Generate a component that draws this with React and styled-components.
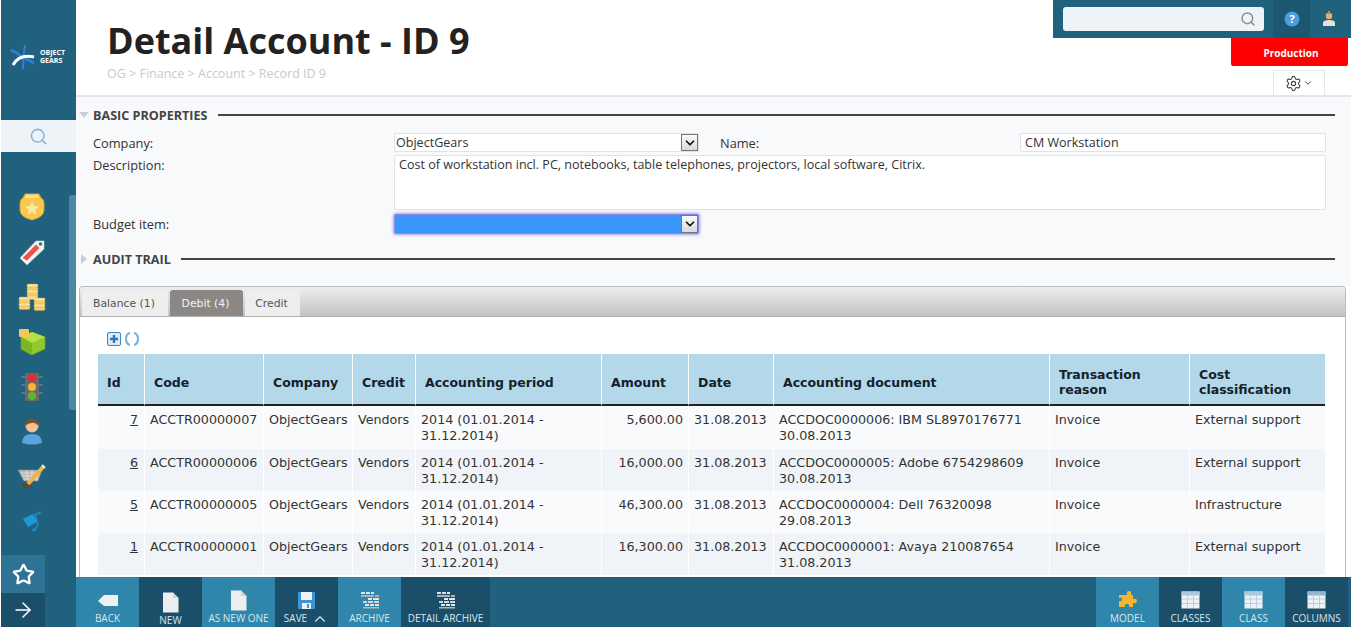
import React from "react"
import styled, { createGlobalStyle } from "styled-components"
import { Search, Star, ArrowRight, ChevronDown, ChevronUp, Settings } from "lucide-react"

const GlobalStyle = createGlobalStyle`
  html, body { margin: 0; padding: 0; height: 100%; overflow: hidden; }
  body { font-family: "Open Sans", "Liberation Sans", sans-serif; color: #333; background: #fff; }
  * { box-sizing: border-box; }
`

const Page = styled.div`
  display: flex;
  width: 1351px;
  height: 627px;
  overflow: hidden;
  padding-left: 1px;
`

const Sidebar = styled.aside`
  width: 75px;
  flex: none;
  display: flex;
  flex-direction: column;
  background: #20627d;
`

const LogoBox = styled.div`
  height: 120px;
  flex: none;
  display: flex;
  align-items: center;
  gap: 4px;
  padding: 0 0 6px 9px;
`

const LogoText = styled.div`
  color: #fff;
  font-size: 7px;
  font-weight: 700;
  line-height: 8px;
`

const SideSearch = styled.div`
  height: 32px;
  flex: none;
  background: #eef3f8;
  display: flex;
  align-items: center;
  justify-content: center;
  color: #86b8dc;
`

const SideBody = styled.div`
  flex: 1;
  display: flex;
  min-height: 0;
`

const IconColumn = styled.div`
  flex: 1;
  display: flex;
  flex-direction: column;
  align-items: center;
  padding-top: 33px;
  padding-right: 7px;
`

const SideIcon = styled.div`
  height: 44.8px;
  flex: none;
  display: flex;
  align-items: center;
  justify-content: center;
`

const ScrollTrack = styled.div`
  width: 7px;
  flex: none;
  padding-top: 43px;
`

const ScrollThumb = styled.div`
  height: 215px;
  background: #4d87a1;
  border-radius: 3px 0 0 3px;
`

const SideButton = styled.div`
  width: 44px;
  flex: none;
  height: ${p => p.$h}px;
  background: ${p => p.$bg};
  color: #fff;
  display: flex;
  align-items: center;
  justify-content: center;
`

const Main = styled.main`
  flex: 1;
  min-width: 0;
  display: flex;
  flex-direction: column;
`

const Header = styled.header`
  height: 97px;
  flex: none;
  display: flex;
  justify-content: space-between;
  border-bottom: 2px solid #e3e5e8;
`

const TitleBlock = styled.div`
  padding: 17px 0 0 31px;
`

const Title = styled.h1`
  margin: 0;
  font-size: 36px;
  line-height: 48px;
  font-weight: 700;
  color: #222;
`

const Crumbs = styled.div`
  font-size: 12.5px;
  line-height: 17px;
  color: #c9c9c9;
`

const HeaderRight = styled.div`
  width: 298px;
  display: flex;
  flex-direction: column;
  align-items: flex-end;
`

const TopBar = styled.div`
  width: 298px;
  height: 38px;
  flex: none;
  background: #20627d;
  display: flex;
  padding: 0 3px 0 10px;
`

const TopSearch = styled.div`
  width: 201px;
  height: 24px;
  margin-top: 7px;
  background: #eef3f8;
  border-radius: 3px;
  display: flex;
  align-items: center;
  justify-content: flex-end;
  padding-right: 8px;
  color: #8a8f94;
`

const TopButton = styled.div`
  width: 37px;
  height: 38px;
  margin-left: ${p => p.$ml || 0}px;
  background: ${p => p.$bg || "transparent"};
  display: flex;
  align-items: center;
  justify-content: center;
`

const Env = styled.div`
  width: 117px;
  height: 29px;
  margin-right: 3px;
  padding: 2px 0 0 3px;
  background: #fe0000;
  color: #fff;
  font-size: 10px;
  font-weight: 700;
  border-radius: 0 0 2px 2px;
  display: flex;
  align-items: center;
  justify-content: center;
`

const GearBox = styled.div`
  width: 52px;
  height: 25px;
  margin: 4px 26px 0 0;
  border: 1px solid #e6e6e6;
  border-bottom: 0;
  display: flex;
  align-items: center;
  justify-content: center;
  gap: 1px;
  color: #444;
`

const FormArea = styled.section`
  flex: none;
  background: #f8f9fb;
  height: 189px;
`

const SectionHead = styled.div`
  height: ${p => p.$h}px;
  display: flex;
  align-items: center;
  padding: 0 16px 0 3px;
  font-size: 12.6px;
  font-weight: 700;
  color: #444;
`

const Triangle = styled.span`
  width: 0;
  height: 0;
  margin-right: 4px;
  ${p => p.$open
    ? "border-left: 5px solid transparent; border-right: 5px solid transparent; border-top: 6px solid #c9ced3;"
    : "margin-left: 2px; margin-right: 6px; border-top: 5px solid transparent; border-bottom: 5px solid transparent; border-left: 6px solid #c9ced3;"}
`

const SectionLine = styled.span`
  flex: 1;
  height: 2px;
  margin-left: 10px;
  background: #444;
`

const FormGrid = styled.div`
  display: grid;
  grid-template-columns: 301px 305px 21px 300px 306px;
  grid-template-rows: 19px 56px 20px;
  row-gap: 3px;
  padding-left: 17px;
  font-size: 12.8px;
  color: #333;
`

const Label = styled.label`
  line-height: 20px;
  grid-column: ${p => p.$col || "auto"};
`

const Field = styled.div`
  background: #fff;
  border: 1px solid #dfe2e6;
  border-radius: 2px;
  padding: 0 4px;
  line-height: 18px;
  font-size: 12.55px;
  color: #333;
  white-space: nowrap;
  overflow: hidden;
  grid-column: ${p => p.$col || "auto"};
`

const TextArea = styled(Field)`
  height: 55px;
`

const SelectBox = styled.div`
  display: flex;
  gap: 1px;
  height: ${p => (p.$focus ? 20 : 19)}px;
  background: ${p => (p.$focus ? "#3a97fa" : "#fff")};
  border: 1px solid ${p => (p.$focus ? "#8d88e6" : "#dfe2e6")};
  box-shadow: ${p => (p.$focus ? "0 0 3px 1px #a9a5ee" : "none")};
  border-radius: 2px;
  font-size: 12.55px;
  line-height: 18px;
  padding-left: 1px;
  color: #333;
`

const SelectValue = styled.span`
  flex: 1;
`

const SelectArrow = styled.span`
  width: 17px;
  flex: none;
  display: flex;
  align-items: center;
  justify-content: center;
  background: linear-gradient(#fbfbfb, #d9d9d9);
  border: 1px solid #777;
  color: #111;
`

const TabPanel = styled.section`
  flex: 1;
  min-height: 0;
  margin: 0 5px 0 3px;
  border: 1px solid #b8bcc0;
  border-bottom: 0;
  border-radius: 4px 4px 0 0;
  background: #fff;
  overflow: hidden;
`

const TabBar = styled.div`
  height: 30px;
  display: flex;
  gap: 2px;
  align-items: flex-end;
  padding-left: 2px;
  background: linear-gradient(#eeeeee, #c3c3c3);
  border-bottom: 1px solid #b0b0b0;
`

const Tab = styled.div`
  width: ${p => p.$w}px;
  height: 26px;
  padding: 1px 2px 0 0;
  display: flex;
  align-items: center;
  justify-content: center;
  font-family: "DejaVu Sans", Verdana, sans-serif;
  font-size: 10.8px;
  border-radius: 3px 3px 0 0;
  background: ${p => (p.$active ? "#8a8785" : "#eeeeee")};
  color: ${p => (p.$active ? "#f2f2f2" : "#555")};
`

const TabBody = styled.div`
  padding: 13px 20px 0 18px;
`

const Actions = styled.div`
  height: 24px;
  display: flex;
  gap: 4px;
  padding: 2px 0 0 9px;
`

const Table = styled.table`
  width: 1227px;
  table-layout: fixed;
  border-collapse: separate;
  border-spacing: 0;
  font-family: "DejaVu Sans", Verdana, sans-serif;
  font-size: 12.7px;
  color: #333;
`

const Th = styled.th`
  height: 52px;
  background: #b2d8ea;
  border-right: 1px solid #fff;
  border-bottom: 2px solid #222;
  padding: 6px 0 0 9px;
  text-align: left;
  vertical-align: middle;
  font-size: 12.5px;
  line-height: 15px;
  font-weight: 700;
  color: #14212b;
  &:last-child { border-right: 0; }
`

const Row = styled.tr`
  &:first-child td { height: 43px; }
`

const Td = styled.td`
  height: 42px;
  padding: 6px 5px 4px;
  line-height: 16px;
  vertical-align: top;
  border-right: 1px solid #fff;
  text-align: ${p => (p.$right ? "right" : "left")};
  background: ${p => (p.$even ? "#f0f3f7" : "#f9fafc")};
  &:last-child { border-right: 0; }
`

const IdLink = styled.span`
  text-decoration: underline;
  padding-right: 1px;
`

const Toolbar = styled.footer`
  height: 50px;
  flex: none;
  background: #20627d;
  display: flex;
  justify-content: space-between;
  padding-right: 3px;
`

const ToolGroup = styled.div`
  display: flex;
`

const ToolButton = styled.div`
  width: ${p => p.$w}px;
  height: 50px;
  background: ${p => (p.$light ? "#2f86aa" : "#1b4f69")};
  color: #d8e6ee;
  font-size: 10px;
  white-space: nowrap;
  display: flex;
  flex-direction: column;
  align-items: center;
  justify-content: flex-start;
  padding-top: ${p => p.$top ?? 11}px;
`

const ToolIcon = styled.div`
  height: 24px;
  display: flex;
  align-items: center;
  justify-content: center;
`

const ToolLabel = styled.div`
  display: flex;
  align-items: center;
  gap: 4px;
  line-height: 13px;
  margin-top: ${p => p.$mt ?? 0}px;
`

// -- drawn icons --

const LogoMark = () => (
  <svg width="26" height="26" viewBox="0 0 26 26">
    <path d="M1 6 Q8 9 12 13 L24 19" stroke="#2f7fe0" strokeWidth="2.6" fill="none" />
    <path d="M15 1 Q13 12 13 25" stroke="#2f7fe0" strokeWidth="2" fill="none" />
    <path d="M3 21 Q9 10 24 13" stroke="#fff" strokeWidth="3" fill="none" />
  </svg>
)

const Badge = () => (
  <svg width="26" height="28" viewBox="0 0 26 28">
    <path d="M6 1 H20 L22 5 Q25 6 25 10 V17 Q25 24 13 27 Q1 24 1 17 V10 Q1 6 4 5 Z" fill="#f7c94f" stroke="#d99a2b" strokeWidth="1" />
    <path d="M7 1.5 H19 L20 5 H6 Z" fill="#fbe08a" />
    <path d="M13 8 L15 13 L20 13.5 L16 17 L17.5 22 L13 19 L8.5 22 L10 17 L6 13.5 L11 13 Z" fill="#fde9a3" />
  </svg>
)

const TagIcon = () => (
  <svg width="28" height="28" viewBox="0 0 28 28">
    <path d="M2 20 L18 3 H26 V11 L9 27 Z" fill="#f4f4f4" stroke="#c9c9c9" strokeWidth="0.6" />
    <path d="M4.5 20 L18 6.5 L21.5 10 L9 22.5 Z" fill="#e8544a" />
    <circle cx="22.5" cy="6" r="1.8" fill="#3d6f8a" />
  </svg>
)

const Coin = ({ x, y, n }) => (
  <g>
    {Array.from({ length: n }).map((_, i) => (
      <rect key={i} x={x} y={y + i * 3} width="11" height="3.4" rx="1.4" fill={i % 2 ? "#f6cf6c" : "#fbe39b"} stroke="#dca63f" strokeWidth="0.4" />
    ))}
  </g>
)

const Coins = () => (
  <svg width="28" height="28" viewBox="0 0 28 28">
    <Coin x={9} y={1} n={5} />
    <Coin x={1} y={14} n={4} />
    <Coin x={16} y={15} n={4} />
  </svg>
)

const GreenBox = () => (
  <svg width="28" height="28" viewBox="0 0 28 28">
    <path d="M14 4 L27 9 V21 L14 27 L3 21 V9 Z" fill="#8fc92f" stroke="#6ba01f" strokeWidth="0.6" />
    <path d="M3 9 L14 15 L27 9 L14 4 Z" fill="#b4e04a" />
    <path d="M14 15 V27 L3 21 V9 Z" fill="#7db524" />
    <rect x="1" y="1" width="10" height="8" rx="1" fill="#f6c65c" />
  </svg>
)

const TrafficLight = () => (
  <svg width="22" height="30" viewBox="0 0 22 30">
    <path d="M0 5 H22 M0 13 H22 M0 21 H22" stroke="#8b8b8b" strokeWidth="1" />
    <rect x="4" y="1" width="14" height="28" rx="1.5" fill="#6a6a6a" />
    <circle cx="11" cy="6" r="4" fill="#f0282e" />
    <circle cx="11" cy="15" r="4" fill="#f7b53c" />
    <circle cx="11" cy="24" r="4" fill="#5cb53a" />
  </svg>
)

const Person = () => (
  <svg width="24" height="28" viewBox="0 0 24 28">
    <path d="M2 26 Q2 17 12 17 Q22 17 22 26 Q12 29 2 26 Z" fill="#5aa3dc" />
    <circle cx="12" cy="9" r="6.5" fill="#f2c19a" />
    <path d="M5.5 9 Q5 2 12 2 Q19 2 18.5 9 Q15 5 12 6 Q8 6 5.5 9 Z" fill="#8a4b22" />
  </svg>
)

const Cart = () => (
  <svg width="30" height="28" viewBox="0 0 30 28">
    <path d="M1 8 H25 L21 19 H7 Z" fill="#b8b6b8" stroke="#8d8b8d" strokeWidth="0.6" />
    <path d="M4 11 H23 M5 14 H22 M6 17 H21 M9 8 L11 19 M15 8 V19 M21 8 L19 19" stroke="#e4e2e4" strokeWidth="0.8" />
    <ellipse cx="10" cy="23" rx="5" ry="2.6" fill="#5a4a3a" />
    <path d="M11 22 L26 5" stroke="#f2b544" strokeWidth="4" />
    <path d="M25 3 L28 6" stroke="#f4f0e0" strokeWidth="2" />
  </svg>
)

const Truck = () => (
  <svg width="24" height="24" viewBox="0 0 24 24">
    <path d="M3 10 L13 5 L17 13 L8 18 Z" fill="#1f9ad6" />
    <path d="M21 3 L15 6 L18 15 L15 21" stroke="#1f8cc4" strokeWidth="1.6" fill="none" />
    <circle cx="14" cy="21" r="1.8" fill="#1f8cc4" />
  </svg>
)

const BackIcon = () => (
  <svg width="22" height="13" viewBox="0 0 22 13">
    <path d="M7 1 H21 V12 H7 L1 7 Z" fill="#eef0f2" />
  </svg>
)

const PageIcon = () => (
  <svg width="17" height="21" viewBox="0 0 17 21">
    <path d="M1 0.5 H11 L16.5 6 V20.5 H1 Z" fill="#eceef0" />
    <path d="M11 0.5 L16.5 6 H11 Z" fill="#cfd3d6" />
  </svg>
)

const SaveIcon = () => (
  <svg width="19" height="19" viewBox="0 0 19 19">
    <path d="M1 1 H18 V18 H1 Z" fill="#3f93d6" />
    <rect x="4" y="1" width="11" height="8" fill="#eef2f5" />
    <rect x="5" y="12" width="9" height="6" fill="#eef2f5" />
    <rect x="10" y="13" width="2" height="4" fill="#3f93d6" />
  </svg>
)

const ArchiveIcon = () => (
  <svg width="20" height="18" viewBox="0 0 20 18">
    <path d="M1 1 H5 V3 H1 Z M6 1 H10 V3 H6 Z M11 1 H14 V3 H11 Z" fill="#e0e1e4" />
    <path d="M1 4 H14 V6 H1 Z M15 4 H19 V6 H15 Z" fill="#aeb1b6" />
    <path d="M8 7 H12 V9 H8 Z M13 7 H19 V9 H13 Z" fill="#e6e7ea" />
    <path d="M3 10 H7 V12 H3 Z M8 10 H13 V12 H8 Z M14 10 H19 V12 H14 Z" fill="#d4d5d9" />
    <path d="M5 13 H9 V15 H5 Z M10 13 H14 V15 H10 Z M15 13 H19 V15 H15 Z" fill="#e6e7ea" />
    <path d="M3 16 H19 V17.5 H3 Z" fill="#b4b6bb" />
  </svg>
)

const Puzzle = () => (
  <svg width="20" height="20" viewBox="0 0 20 20">
    <path d="M6 5 H9 Q8 1 11 1 Q14 1 13 5 H15 V9 Q19 8 19 11 Q19 14 15 13 V17 H11 Q12 14 9 14 Q6 14 7 17 H1 V11 Q4 12 4 9 Q4 7 1 8 V5 Z" fill="#f4b62f" />
  </svg>
)

const GridIcon = ({ head }) => (
  <svg width="19" height="18" viewBox="0 0 19 18">
    <rect x="0.5" y="0.5" width="18" height="17" fill="#eef2f5" />
    <rect x="0.5" y="0.5" width="18" height="4" fill={head ? "#8fb5d0" : "#a9c9de"} />
    <path d="M6.5 1 V17 M12.5 1 V17 M1 8 H18 M1 12.5 H18" stroke="#a9c9de" strokeWidth="0.8" />
  </svg>
)

const HelpIcon = () => (
  <svg width="16" height="16" viewBox="0 0 16 16">
    <circle cx="8" cy="8" r="7.5" fill="#4a9ee0" />
    <text x="8" y="12" textAnchor="middle" fontSize="11" fontWeight="700" fontFamily="Open Sans" fill="#fff">?</text>
  </svg>
)

const UserIcon = () => (
  <svg width="14" height="16" viewBox="0 0 14 16">
    <path d="M1 15 V12 Q1 9 7 9 Q13 9 13 12 V15 Z" fill="#e6e2d8" />
    <circle cx="7" cy="5" r="3.2" fill="#e8b070" />
    <path d="M6 0 H8 V3 H6 Z" fill="#c98a44" />
  </svg>
)

const AddIcon = () => (
  <svg width="14" height="14" viewBox="0 0 14 14">
    <rect x="0.5" y="0.5" width="13" height="13" rx="1.5" fill="#dcebf7" stroke="#3f83b8" />
    <path d="M7 3 V11 M3 7 H11" stroke="#2f78b4" strokeWidth="2.4" />
  </svg>
)

const BracketsIcon = () => (
  <svg width="14" height="14" viewBox="0 0 14 14">
    <path d="M5 1 Q1 2 1 7 Q1 12 5 13 M9 1 Q13 2 13 7 Q13 12 9 13" stroke="#7fb3da" strokeWidth="2.2" fill="none" />
  </svg>
)

// -- data --

const sideIcons = [Badge, TagIcon, Coins, GreenBox, TrafficLight, Person, Cart, Truck]

const columns = [
  { name: "Id", w: 47 },
  { name: "Code", w: 119 },
  { name: "Company", w: 89 },
  { name: "Credit", w: 63 },
  { name: "Accounting period", w: 186 },
  { name: "Amount", w: 87 },
  { name: "Date", w: 85 },
  { name: "Accounting document", w: 276 },
  { name: "Transaction reason", w: 140 },
  { name: "Cost classification", w: 135 },
]

const period = "2014 (01.01.2014 - 31.12.2014)"

const rows = [
  ["7", "ACCTR00000007", "5,600.00", "ACCDOC0000006: IBM SL8970176771 30.08.2013", "External support"],
  ["6", "ACCTR00000006", "16,000.00", "ACCDOC0000005: Adobe 6754298609 30.08.2013", "External support"],
  ["5", "ACCTR00000005", "46,300.00", "ACCDOC0000004: Dell 76320098 29.08.2013", "Infrastructure"],
  ["1", "ACCTR00000001", "16,300.00", "ACCDOC0000001: Avaya 210087654 31.08.2013", "External support"],
]

const leftTools = [
  { label: "BACK", w: 63, light: true, icon: <BackIcon /> },
  { label: "NEW", w: 63, icon: <PageIcon />, top: 15, mt: 1 },
  { label: "AS NEW ONE", w: 73, light: true, icon: <PageIcon /> },
  { label: "SAVE", w: 63, icon: <SaveIcon />, up: true },
  { label: "ARCHIVE", w: 63, light: true, icon: <ArchiveIcon /> },
  { label: "DETAIL ARCHIVE", w: 89, icon: <ArchiveIcon /> },
]

const rightTools = [
  { label: "MODEL", w: 63, light: true, icon: <Puzzle /> },
  { label: "CLASSES", w: 63, icon: <GridIcon /> },
  { label: "CLASS", w: 63, light: true, icon: <GridIcon /> },
  { label: "COLUMNS", w: 63, icon: <GridIcon head /> },
]

const SaveChevron = styled(ChevronUp)`
  margin: -3px 0;
`

const Tool = ({ tool }) => (
  <ToolButton $w={tool.w} $light={tool.light} $top={tool.top}>
    <ToolIcon>{tool.icon}</ToolIcon>
    <ToolLabel $mt={tool.mt}>
      {tool.label}
      {tool.up && <SaveChevron size={18} strokeWidth={1.5} />}
    </ToolLabel>
  </ToolButton>
)

const Arrow = () => (
  <SelectArrow>
    <ChevronDown size={14} strokeWidth={3} />
  </SelectArrow>
)

const App = () => {
  return (
    <Page>
      <GlobalStyle />
      <Sidebar>
        <LogoBox>
          <LogoMark />
          <LogoText>OBJECT<br />GEARS</LogoText>
        </LogoBox>
        <SideSearch>
          <Search size={19} strokeWidth={2} />
        </SideSearch>
        <SideBody>
          <IconColumn>
            {sideIcons.map((Icon, i) => (
              <SideIcon key={i}><Icon /></SideIcon>
            ))}
          </IconColumn>
          <ScrollTrack><ScrollThumb /></ScrollTrack>
        </SideBody>
        <SideButton $h={38} $bg="#2e7394">
          <Star size={23} strokeWidth={2.4} />
        </SideButton>
        <SideButton $h={34} $bg="#1b4f69">
          <ArrowRight size={24} strokeWidth={1.5} />
        </SideButton>
      </Sidebar>

      <Main>
        <Header>
          <TitleBlock>
            <Title>Detail Account - ID 9</Title>
            <Crumbs>OG &gt; Finance &gt; Account &gt; Record ID 9</Crumbs>
          </TitleBlock>
          <HeaderRight>
            <TopBar>
              <TopSearch><Search size={16} strokeWidth={2.2} /></TopSearch>
              <TopButton $ml={9} $bg="#1d5670"><HelpIcon /></TopButton>
              <TopButton><UserIcon /></TopButton>
            </TopBar>
            <Env>Production</Env>
            <GearBox>
              <Settings size={17} strokeWidth={1.6} />
              <ChevronDown size={10} strokeWidth={2.4} />
            </GearBox>
          </HeaderRight>
        </Header>

        <FormArea>
          <SectionHead $h={36}>
            <Triangle $open />
            BASIC PROPERTIES
            <SectionLine />
          </SectionHead>
          <FormGrid>
            <Label>Company:</Label>
            <SelectBox>
              <SelectValue>ObjectGears</SelectValue>
              <Arrow />
            </SelectBox>
            <Label $col="4">Name:</Label>
            <Field>CM Workstation</Field>
            <Label>Description:</Label>
            <TextArea $col="2 / 6">
              Cost of workstation incl. PC, notebooks, table telephones, projectors, local software, Citrix.
            </TextArea>
            <Label>Budget item:</Label>
            <SelectBox $focus>
              <SelectValue />
              <Arrow />
            </SelectBox>
          </FormGrid>
          <SectionHead $h={50}>
            <Triangle />
            AUDIT TRAIL
            <SectionLine />
          </SectionHead>
        </FormArea>

        <TabPanel>
          <TabBar>
            <Tab $w={86}>Balance (1)</Tab>
            <Tab $w={73} $active>Debit (4)</Tab>
            <Tab $w={55}>Credit</Tab>
          </TabBar>
          <TabBody>
            <Actions>
              <AddIcon />
              <BracketsIcon />
            </Actions>
            <Table>
              <colgroup>
                {columns.map(c => <col key={c.name} style={{ width: c.w }} />)}
              </colgroup>
              <thead>
                <tr>
                  {columns.map(c => <Th key={c.name}>{c.name}</Th>)}
                </tr>
              </thead>
              <tbody>
                {rows.map((r, i) => {
                  const even = i % 2 === 1
                  return (
                    <Row key={r[0]}>
                      <Td $even={even} $right><IdLink>{r[0]}</IdLink></Td>
                      <Td $even={even}>{r[1]}</Td>
                      <Td $even={even}>ObjectGears</Td>
                      <Td $even={even}>Vendors</Td>
                      <Td $even={even}>{period}</Td>
                      <Td $even={even} $right>{r[2]}</Td>
                      <Td $even={even}>31.08.2013</Td>
                      <Td $even={even}>{r[3]}</Td>
                      <Td $even={even}>Invoice</Td>
                      <Td $even={even}>{r[4]}</Td>
                    </Row>
                  )
                })}
              </tbody>
            </Table>
          </TabBody>
        </TabPanel>

        <Toolbar>
          <ToolGroup>
            {leftTools.map(t => <Tool key={t.label} tool={t} />)}
          </ToolGroup>
          <ToolGroup>
            {rightTools.map(t => <Tool key={t.label} tool={t} />)}
          </ToolGroup>
        </Toolbar>
      </Main>
    </Page>
  )
}

export default App
